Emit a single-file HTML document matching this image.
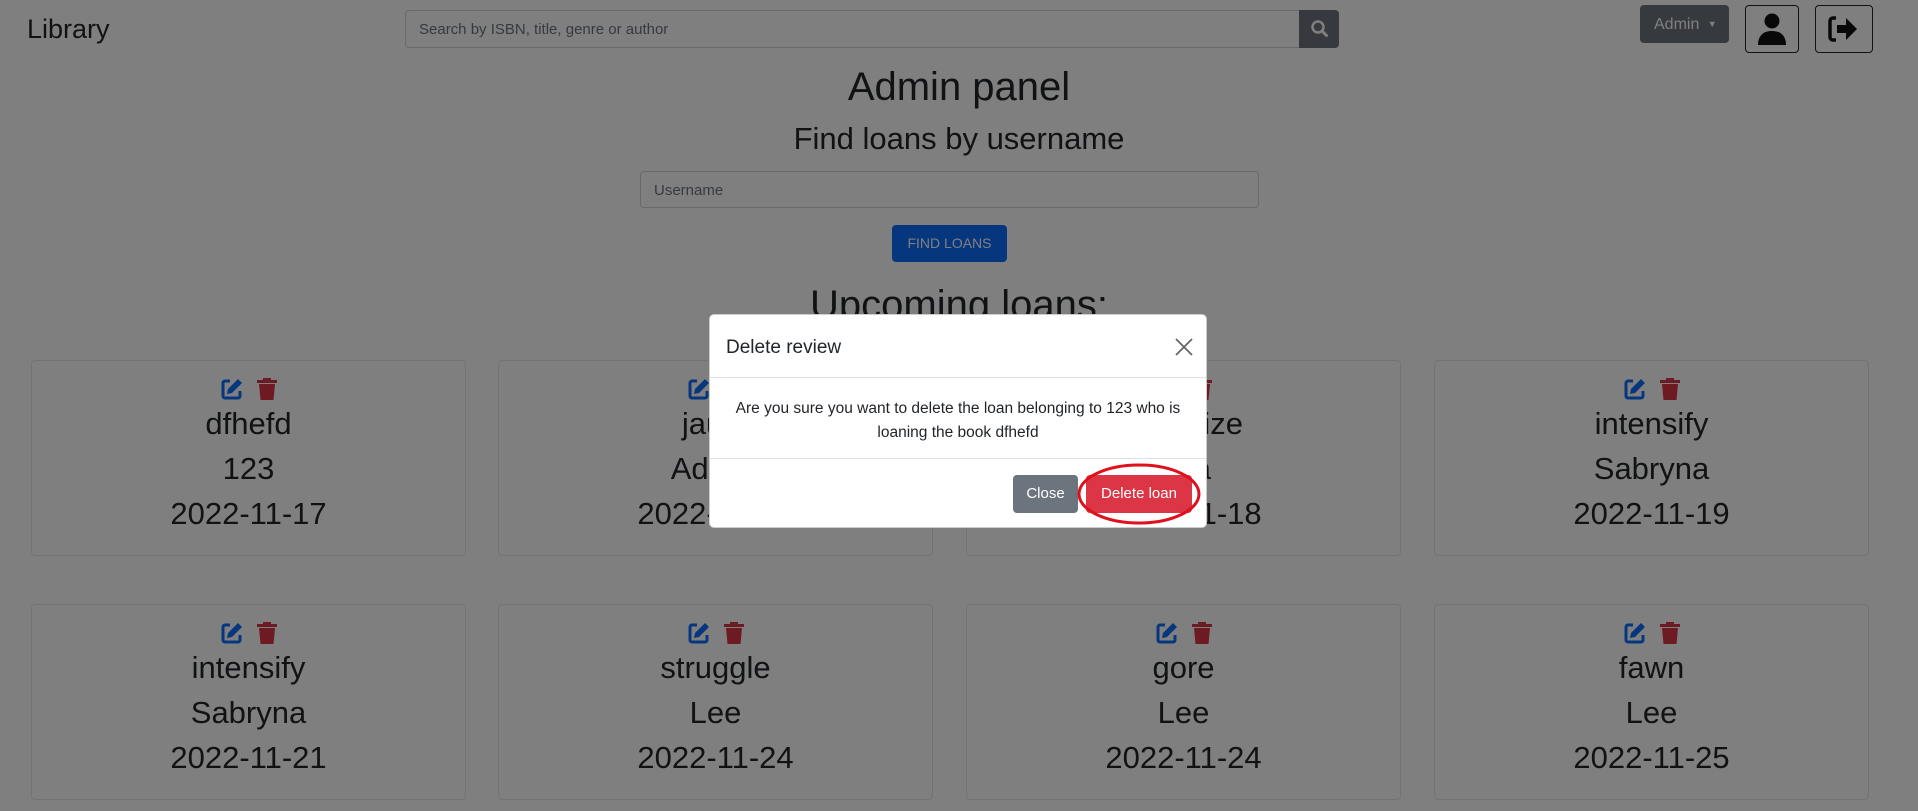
<!DOCTYPE html>
<html><head><meta charset="utf-8"><style>
*{box-sizing:border-box;margin:0;padding:0}
body{width:1918px;height:811px;overflow:hidden;background:#fff;font-family:"Liberation Sans",sans-serif;color:#212529;position:relative}
.a{position:absolute}
.c{position:absolute;text-align:center;white-space:nowrap}
.card{position:absolute;border:1px solid #e4e6e9;border-radius:4px;background:#fff;width:435px;height:196px}
.card .ic{position:absolute;top:16px;left:0;width:100%;text-align:center}
.card .l{position:absolute;left:0;width:100%;text-align:center;font-size:31px;line-height:40px}
</style></head><body>
<div class="a" style="left:27px;top:14px;font-size:27px">Library</div>
<div class="a" style="left:405px;top:10px;width:895px;height:38px;border:1px solid #ced4da;border-radius:4px 0 0 4px;font-size:15px;color:#6c757d;padding:10px 13px">Search by ISBN, title, genre or author</div>
<div class="a" style="left:1299px;top:10px;width:40px;height:38px;background:#6c757d;border-radius:0 4px 4px 0">
<svg width="40" height="38" viewBox="0 0 40 38"><circle cx="19" cy="17" r="5.5" fill="none" stroke="#fff" stroke-width="2.5"/><path d="M23 21l4.5 4.5" stroke="#fff" stroke-width="3" stroke-linecap="round"/></svg></div>
<div class="a" style="left:1640px;top:5px;width:89px;height:38px;background:#6c757d;border-radius:4px;color:#fff;font-size:16px;padding:11px 0 0 14px">Admin <span style="font-size:9px;vertical-align:2px;margin-left:4px">▼</span></div>
<div class="a" style="left:1745px;top:5px;width:54px;height:48px;border:1.5px solid #212529;border-radius:4px">
<svg width="52" height="46" viewBox="0 0 52 46"><circle cx="26" cy="15" r="7.5" fill="#111"/><path d="M12 39c0-9 5-14 14-14s14 5 14 14z" fill="#111"/></svg></div>
<div class="a" style="left:1815px;top:5px;width:58px;height:48px;border:1.5px solid #212529;border-radius:4px">
<svg width="56" height="46" viewBox="0 0 56 46"><path d="M20 12h-3a3 3 0 0 0-3 3v16a3 3 0 0 0 3 3h3" fill="none" stroke="#111" stroke-width="3.5"/><path d="M21 19h9v-7l11 11-11 11v-7h-9z" fill="#111"/></svg></div>

<div class="c" style="left:0;width:1918px;top:62px;font-size:40px;line-height:50px">Admin panel</div>
<div class="c" style="left:0;width:1918px;top:120px;font-size:31px;line-height:38px">Find loans by username</div>
<div class="a" style="left:640px;top:171px;width:619px;height:37px;border:1px solid #ced4da;border-radius:4px;font-size:15px;color:#6c757d;padding:10px 13px">Username</div>
<div class="a" style="left:892px;top:225px;width:115px;height:37px;background:#0d6efd;border-radius:4px;color:#fff;font-size:14px;text-align:center;line-height:37px">FIND LOANS</div>
<div class="c" style="left:0;width:1918px;top:280px;font-size:40px;line-height:50px">Upcoming loans:</div>

<div id="cards"></div>
<script>
var d=[["dfhefd","123","2022-11-17"],["jaunt","Adrian","2022-11-18"],["organize","Rita","2022-11-18"],["intensify","Sabryna","2022-11-19"],["intensify","Sabryna","2022-11-21"],["struggle","Lee","2022-11-24"],["gore","Lee","2022-11-24"],["fawn","Lee","2022-11-25"]];
var xs=[31,498,966,1434],ys=[360,604],h="";
var ed='<svg width="24" height="24" viewBox="0 0 24 24" style="margin-right:12px"><path d="M10 4H5a2 2 0 0 0-2 2v13a2 2 0 0 0 2 2h13a2 2 0 0 0 2-2v-5" fill="none" stroke="#0d6efd" stroke-width="3"/><path d="M18 2l4 4-10 10-5 1 1-5z" fill="#0d6efd"/></svg>';
var tr='<svg width="22" height="24" viewBox="0 0 22 24"><path d="M1 3h20v3H1z M7 1h8v3H7z" fill="#dc3545"/><path d="M3 7h16l-1.5 16h-13z" fill="#dc3545"/></svg>';
d.forEach(function(c,i){h+='<div class="card" style="left:'+xs[i%4]+'px;top:'+ys[Math.floor(i/4)]+'px"><div class="ic">'+ed+tr+'</div><div class="l" style="top:43px">'+c[0]+'</div><div class="l" style="top:88px">'+c[1]+'</div><div class="l" style="top:133px">'+c[2]+'</div></div>'});
document.getElementById("cards").innerHTML=h;
</script>

<div class="a" style="left:0;top:0;width:1918px;height:811px;background:rgba(0,0,0,.5)"></div>

<div class="a" style="left:709px;top:314px;width:498px;height:214px;background:#fff;border-radius:5px;border:1px solid rgba(0,0,0,.2)">
<div class="a" style="left:16px;top:22px;font-size:19px">Delete review</div>
<svg class="a" style="left:464px;top:22px" width="20" height="20" viewBox="0 0 20 20"><path d="M2 2l16 16M18 2L2 18" stroke="#666" stroke-width="1.8"/></svg>
<div class="a" style="left:0;top:62px;width:100%;border-top:1px solid #dee2e6"></div>
<div class="a" style="left:0;top:82px;width:100%;text-align:center;font-size:15.5px;line-height:24px">Are you sure you want to delete the loan belonging to 123 who is<br>loaning the book dfhefd</div>
<div class="a" style="left:0;top:143px;width:100%;border-top:1px solid #dee2e6"></div>
<div class="a" style="left:303px;top:160px;width:65px;height:38px;background:#6c757d;border-radius:4px;color:#fff;font-size:15px;text-align:center;line-height:38px">Close</div>
<div class="a" style="left:376px;top:160px;width:106px;height:38px;background:#dc3545;border-radius:4px;color:#fff;font-size:15px;text-align:center;line-height:38px">Delete loan</div>
</div>
<svg class="a" style="left:1070px;top:460px" width="140" height="70" viewBox="0 0 140 70"><ellipse cx="69" cy="34" rx="60" ry="29" fill="none" stroke="#e0101c" stroke-width="3"/></svg>
</body></html>
